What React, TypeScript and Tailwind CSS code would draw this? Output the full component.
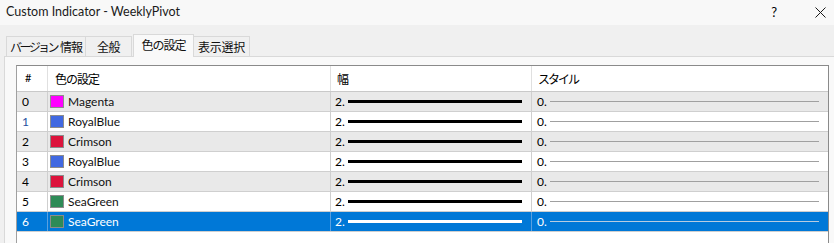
import React from "react";

type Row = { name: string; color: string };
const rows: Row[] = [
  { name: "Magenta", color: "#ff00ff" },
  { name: "RoyalBlue", color: "#4169e1" },
  { name: "Crimson", color: "#dc143c" },
  { name: "RoyalBlue", color: "#4169e1" },
  { name: "Crimson", color: "#dc143c" },
  { name: "SeaGreen", color: "#2e8b57" },
  { name: "SeaGreen", color: "#2e8b57" },
];

export default function App() {
  return (
    <div className="w-[834px] h-[243px] overflow-hidden bg-[#f0f0f0] text-[12px] text-[#000] font-['Lato','Noto_Sans_CJK_JP',sans-serif]">
      {/* Title bar */}
      <div className="h-[25px] bg-[#f8f8f8] flex items-center pl-[6px] pr-[8px]">
        <span className="text-[12.5px] leading-none text-[#1a1a1a]">Custom Indicator - WeeklyPivot</span>
        <span className="ml-auto mr-[38px] text-[13px] leading-none">?</span>
        <svg width="11" height="11" viewBox="0 0 11 11">
          <path d="M0.5 0.5 L10.5 10.5 M10.5 0.5 L0.5 10.5" stroke="#1a1a1a" strokeWidth="1" />
        </svg>
      </div>
      {/* Tabs */}
      <div className="h-[31px] flex items-end pl-[6px] font-['Noto_Sans_CJK_JP',sans-serif] text-[#111]">
        <div className="h-[20px] w-[80px] border border-b-0 border-[#d9d9d9] bg-[#f0f0f0] flex items-center justify-center text-[12px] leading-none whitespace-nowrap">
          <span className="tracking-[-2.6px] mr-[3px]">バージョン</span>
          <span className="tracking-[-1px]">情報</span>
        </div>
        <div className="h-[20px] w-[46px] border border-b-0 border-l-0 border-[#d9d9d9] bg-[#f0f0f0] flex items-center justify-center text-[12px] tracking-[-0.5px] leading-none whitespace-nowrap">全般</div>
        <div className="h-[23px] w-[61px] ml-[1px] border border-b-0 border-[#d9d9d9] bg-[#f9f9f9] flex items-center justify-center text-[12px] tracking-[-1px] leading-none pb-[2px] relative z-10 mb-[-1px] whitespace-nowrap">色の設定</div>
        <div className="h-[20px] w-[56px] border border-b-0 border-l-0 border-[#d9d9d9] bg-[#f0f0f0] flex items-center justify-center text-[12px] tracking-[-0.2px] leading-none whitespace-nowrap">表示選択</div>
      </div>
      {/* Panel */}
      <div className="ml-[4px] h-[200px] bg-[#f9f9f9] border-t border-l border-[#d9d9d9] pl-[11px] pt-[8px]">
        <div className="w-[813px] h-[200px] bg-white border-t border-l border-r border-[#8a8a8a] border-l-[#a0a0a0]">
          {/* Header */}
          <div className="grid grid-cols-[31px_283px_201px_1fr] h-[26px] border-b border-[#c9c9c9] bg-white">
            <div className="border-r border-[#e0e0e0] flex items-center pl-[8px] text-[11px]">#</div>
            <div className="border-r border-[#e0e0e0] flex items-center pl-[7px] text-[12px] tracking-[-1px] font-['Noto_Sans_CJK_JP',sans-serif]">色の設定</div>
            <div className="border-r border-[#e0e0e0] flex items-center pl-[6px] text-[12px] font-['Noto_Sans_CJK_JP',sans-serif]">幅</div>
            <div className="flex items-center pl-[6px] text-[12px] font-['Noto_Sans_CJK_JP',sans-serif]">
              <span className="tracking-[-2px]">スタイル</span>
            </div>
          </div>
          {rows.map((r, i) => {
            const sel = i === 6;
            const bg = sel ? "bg-[#0078d7] text-white" : i % 2 === 0 ? "bg-[#e9e9e9]" : "bg-white";
            const sep = sel ? "border-[#5aa0e0]" : "border-[#cfcfcf]";
            return (
              <div key={i} className={`grid grid-cols-[31px_283px_201px_1fr] h-[20px] border-b border-[#cfcfcf] ${bg}`}>
                <div className={`border-r ${sep} flex items-center pl-[5px] leading-none ${i === 1 ? "text-[#1f4fa0]" : ""}`}>{i}</div>
                <div className={`border-r ${sep} flex items-center pl-[2px] leading-none`}>
                  <span className="w-[14px] h-[13px] border border-[#8c8c8c] mr-[4px]" style={{ backgroundColor: r.color }} />
                  <span className={sel ? "text-white" : "text-[#111]"}>{r.name}</span>
                </div>
                <div className={`border-r ${sep} flex items-center pl-[4px] leading-none`}>
                  <span className="w-[13px]">2.</span>
                  <span className={`h-[3px] w-[174px] ${sel ? "bg-white" : "bg-black"}`} />
                </div>
                <div className="flex items-center pl-[5px] leading-none">
                  <span className="w-[13px]">0.</span>
                  <span className={`h-[1px] w-[269px] ${sel ? "bg-[#b8cce0]" : "bg-[#a0a0a0]"}`} />
                </div>
              </div>
            );
          })}
        </div>
      </div>
    </div>
  );
}
